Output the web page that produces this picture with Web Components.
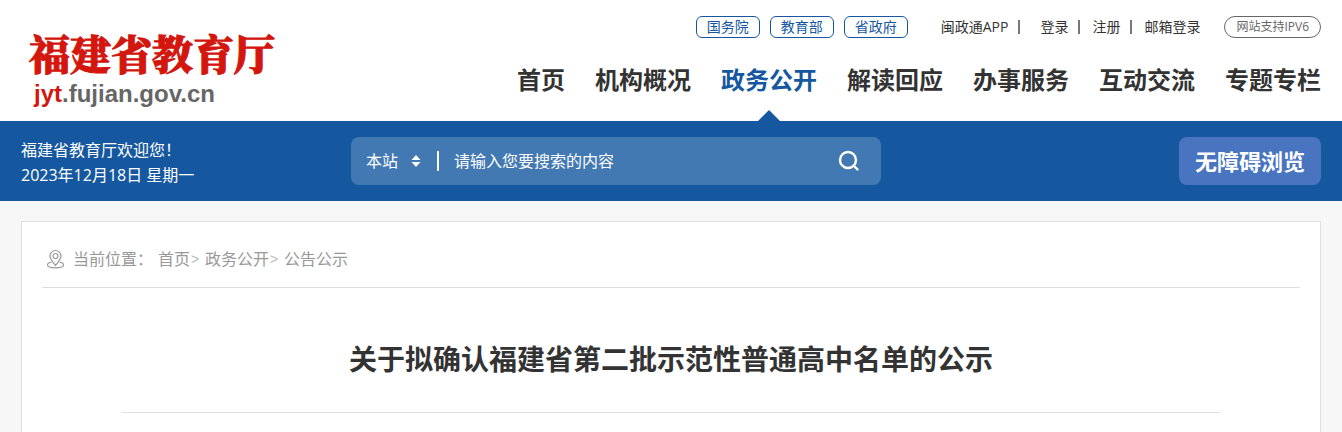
<!DOCTYPE html>
<html lang="zh-CN">
<head>
<meta charset="UTF-8">
<meta name="viewport" content="width=device-width, initial-scale=1.0">
<title>福建省教育厅</title>
<style>
    body {
        margin: 0;
        --blue: #15589f;
        --text: #333333;
        --gutter: 21px;
        font-family: "Open Sans", "Noto Sans CJK SC", sans-serif;
        font-size: 16px;
        color: var(--text);
        background-color: #f7f7f7;
    }
</style>
</head>
<body>
<edu-page>
    <site-header slot="header">
        <site-logo slot="logo" host="jyt" domain=".fujian.gov.cn">福建省教育厅</site-logo>
        <pill-link slot="gov">国务院</pill-link>
        <pill-link slot="gov">教育部</pill-link>
        <pill-link slot="gov">省政府</pill-link>
        <user-links slot="user"></user-links>
        <pill-link slot="user" kind="round">网站支持IPV6</pill-link>
        <main-nav slot="nav">
            <nav-item>首页</nav-item>
            <nav-item>机构概况</nav-item>
            <nav-item active>政务公开</nav-item>
            <nav-item>解读回应</nav-item>
            <nav-item>办事服务</nav-item>
            <nav-item>互动交流</nav-item>
            <nav-item>专题专栏</nav-item>
        </main-nav>
    </site-header>
    <search-band slot="band">
        <span slot="welcome">福建省教育厅欢迎您！</span>
        <span slot="date">2023年12月18日 星期一</span>
    </search-band>
    <article-card>
        <bread-crumb slot="crumb"></bread-crumb>
        关于拟确认福建省第二批示范性普通高中名单的公示
    </article-card>
</edu-page>

<script>
// Shared base: puts the class template into an open shadow root
class BaseElement extends HTMLElement {
    constructor() {
        super();
        this.attachShadow({ mode: 'open' });
        this.shadowRoot.innerHTML = this.render();
    }
}

// Page frame: header, blue band and content
class EduPage extends BaseElement {
    render() {
        return `
            <style>
                :host {
                    display: flex;
                    flex-direction: column;
                    min-height: 100vh;
                }
                main {
                    flex: 1;
                    display: flex;
                    padding: 20px var(--gutter) 0;
                }
            </style>
            <slot name="header"></slot>
            <slot name="band"></slot>
            <main><slot></slot></main>
        `;
    }
}

class SiteHeader extends BaseElement {
    render() {
        return `
            <style>
                :host { display: block; background-color: #ffffff; }
                header {
                    display: flex;
                    justify-content: space-between;
                    padding: 0 var(--gutter);
                }
                .right {
                    display: flex;
                    flex-direction: column;
                    align-items: flex-end;
                    padding-top: 16px;
                }
                .top, .gov, .user { display: flex; align-items: center; }
                .top { gap: 33px; }
                .gov { gap: 10px; }
                .user { gap: 24px; }
            </style>
            <header>
                <slot name="logo"></slot>
                <div class="right">
                    <div class="top">
                        <div class="gov"><slot name="gov"></slot></div>
                        <div class="user"><slot name="user"></slot></div>
                    </div>
                    <slot name="nav"></slot>
                </div>
            </header>
        `;
    }
}

class SiteLogo extends BaseElement {
    render() {
        return `
            <style>
                :host { display: block; padding: 32px 0 0 8px; }
                a { display: block; text-decoration: none; white-space: nowrap; }
                .name {
                    display: block;
                    font: 900 41px/48px "Liberation Serif", "Noto Serif CJK SC", "Noto Sans CJK SC", serif;
                    color: #d3160e;
                    -webkit-text-stroke: 1px #d3160e;
                }
                .domain {
                    display: block;
                    padding-left: 5px;
                    font: bold 24px/28px "Liberation Sans", Arial, sans-serif;
                    color: #666666;
                }
                .domain b { color: #d3160e; }
            </style>
            <a href="#">
                <span class="name"><slot></slot></span>
                <span class="domain"><b>${this.getAttribute('host')}</b>${this.getAttribute('domain')}</span>
            </a>
        `;
    }
}

// Outlined link, kind="round" gives the grey capsule
class PillLink extends BaseElement {
    render() {
        return `
            <style>
                :host { display: block; }
                a {
                    display: block;
                    box-sizing: border-box;
                    padding: 0 10px;
                    border: 1px solid var(--blue);
                    border-radius: 6px;
                    font-size: 14px;
                    line-height: 20px;
                    color: var(--blue);
                    text-decoration: none;
                    white-space: nowrap;
                }
                :host([kind="round"]) a {
                    padding: 0 11px;
                    border-color: #666666;
                    border-radius: 11px;
                    font-size: 12px;
                    color: #666666;
                }
            </style>
            <a href="#"><slot></slot></a>
        `;
    }
}

class UserLinks extends BaseElement {
    render() {
        return `
            <style>
                :host { display: flex; align-items: center; font-size: 14px; line-height: 22px; }
                a { color: inherit; text-decoration: none; white-space: nowrap; }
                i { width: 2px; height: 14px; margin: 0 12px 0 10px; background-color: #777777; }
                .wide { margin-right: 20px; }
            </style>
            <a href="#">闽政通APP</a><i class="wide"></i>
            <a href="#">登录</a><i></i>
            <a href="#">注册</a><i></i>
            <a href="#">邮箱登录</a>
        `;
    }
}

class MainNav extends BaseElement {
    render() {
        return `
            <style>
                :host { display: block; }
                nav { display: flex; gap: 30px; }
            </style>
            <nav><slot></slot></nav>
        `;
    }
}

class NavItem extends BaseElement {
    render() {
        return `
            <style>
                :host { display: block; }
                a {
                    display: block;
                    position: relative;
                    height: 83px;
                    font-size: 24px;
                    font-weight: bold;
                    line-height: 84px;
                    color: var(--text);
                    text-decoration: none;
                    white-space: nowrap;
                }
                :host([active]) a { color: var(--blue); }
                /* Pointer rising from the band */
                :host([active]) a::after {
                    content: "";
                    position: absolute;
                    bottom: 0;
                    left: calc(50% - 11px);
                    border: 11px solid transparent;
                    border-top: 0;
                    border-bottom-color: var(--blue);
                }
            </style>
            <a href="#"><slot></slot></a>
        `;
    }
}

class SearchBand extends BaseElement {
    render() {
        return `
            <style>
                :host { display: block; background-color: var(--blue); color: #ffffff; }
                .band {
                    display: grid;
                    grid-template-columns: 330px minmax(300px, 530px) 1fr;
                    align-items: center;
                    padding: 13px var(--gutter);
                }
                .welcome {
                    display: flex;
                    flex-direction: column;
                    padding-top: 4px;
                    line-height: 25px;
                    white-space: nowrap;
                }
                form {
                    display: flex;
                    align-items: center;
                    height: 48px;
                    padding: 0 20px 0 15px;
                    border-radius: 8px;
                    background-color: rgba(255, 255, 255, 0.2);
                }
                select, input, button {
                    margin: 0;
                    padding: 0;
                    border: 0;
                    background: none;
                    font: inherit;
                    color: inherit;
                }
                label { display: flex; align-items: center; }
                select { appearance: none; width: 44px; }
                option { color: #333333; }
                .line { width: 2px; height: 20px; margin: 0 15px; background-color: #ffffff; }
                input { flex: 1; min-width: 0; height: 48px; }
                input::placeholder { color: #ffffff; opacity: 1; }
                .search { display: flex; }
                .barrier {
                    justify-self: end;
                    height: 48px;
                    padding: 0 16px;
                    border-radius: 8px;
                    background-color: #4874c0;
                    font-size: 22px;
                    font-weight: bold;
                    line-height: 46px;
                    white-space: nowrap;
                }
            </style>
            <div class="band">
                <div class="welcome">
                    <slot name="welcome"></slot>
                    <slot name="date"></slot>
                </div>
                <form>
                    <label>
                        <select aria-label="搜索范围"><option>本站</option></select>
                        <svg width="12" height="14" viewBox="0 0 12 14" fill="#fff"><path d="M6 1l4.500 5h-9zM6 13l4.500-5h-9z"/></svg>
                    </label>
                    <span class="line"></span>
                    <input type="text" aria-label="搜索" placeholder="请输入您要搜索的内容">
                    <button class="search" type="button" aria-label="搜索">
                        <svg width="24" height="24" viewBox="0 0 24 24" fill="none" stroke="#fff" stroke-width="2.400" stroke-linecap="round">
                            <circle cx="11" cy="11" r="8"/><path d="M17 17l3.500 3.500"/>
                        </svg>
                    </button>
                </form>
                <button class="barrier" type="button">无障碍浏览</button>
            </div>
        `;
    }
}

class ArticleCard extends BaseElement {
    render() {
        return `
            <style>
                :host {
                    display: block;
                    flex: 1;
                    padding: 0 20px;
                    border: 1px solid #e0e0e0;
                    border-bottom: 0;
                    background-color: #ffffff;
                }
                h1 {
                    margin: 0 80px;
                    padding: 50px 0 32px;
                    border-bottom: 1px solid #e0e0e0;
                    font-size: 28px;
                    line-height: 42px;
                    text-align: center;
                }
            </style>
            <slot name="crumb"></slot>
            <h1><slot></slot></h1>
        `;
    }
}

class BreadCrumb extends BaseElement {
    render() {
        return `
            <style>
                :host { display: block; border-bottom: 1px solid #dddddd; color: #999999; }
                nav {
                    display: flex;
                    align-items: center;
                    box-sizing: border-box;
                    height: 65px;
                    padding: 8px 4px 0;
                    line-height: 24px;
                }
                svg { margin-right: 8px; }
                .label { margin-right: 5px; }
                a { color: inherit; text-decoration: none; }
                i { width: 14px; margin-left: 1px; font: 14px/24px "Liberation Sans", sans-serif; color: #bbbbbb; }
            </style>
            <nav aria-label="当前位置">
                <svg width="19" height="20" viewBox="0 0 19 20" fill="none" stroke="#999" stroke-width="1.200">
                    <path d="M9.500 16.500C6.500 12.500 4 10 4 7a5.500 5.500 0 0 1 11 0c0 3-2.500 5.500-5.500 9.500z"/>
                    <circle cx="9.500" cy="7" r="2.500"/>
                    <path d="M5.500 13C3 13.500 1.500 14.500 1.500 16c0 1.700 3.500 2.800 8 2.800s8-1.100 8-2.800c0-1.500-1.500-2.500-4-3"/>
                </svg>
                <span class="label">当前位置：</span>
                <a href="#">首页</a><i>&gt;</i>
                <a href="#">政务公开</a><i>&gt;</i>
                <a href="#">公告公示</a>
            </nav>
        `;
    }
}

// Register every element of the page
customElements.define('edu-page', EduPage);
customElements.define('site-header', SiteHeader);
customElements.define('site-logo', SiteLogo);
customElements.define('pill-link', PillLink);
customElements.define('user-links', UserLinks);
customElements.define('main-nav', MainNav);
customElements.define('nav-item', NavItem);
customElements.define('search-band', SearchBand);
customElements.define('article-card', ArticleCard);
customElements.define('bread-crumb', BreadCrumb);
</script>
</body>
</html>
